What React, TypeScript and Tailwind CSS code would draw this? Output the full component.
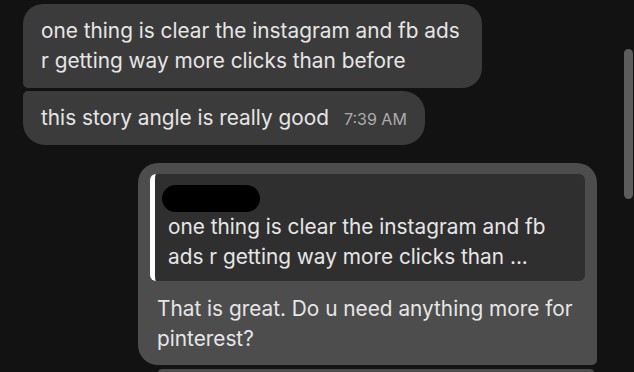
export default function App() {
  return (
    <div
      className="relative h-[372px] w-[634px] overflow-hidden bg-[#121212] text-[#e6e6e6]"
      style={{ fontFamily: "Inter, 'Noto Sans', sans-serif" }}
    >
      <div className="flex flex-col pt-[4px]">
        {/* incoming messages */}
        <div className="flex flex-col items-start gap-[3px] pl-[23px]">
          <div className="w-[459px] rounded-[20px] rounded-bl-[5px] bg-[#3b3b3b] px-[18px] py-[12px] text-[20.8px] leading-[30px]">
            one thing is clear the instagram and fb ads
            <br />r getting way more clicks than before
          </div>
          <div className="flex h-[54px] items-baseline rounded-[22px] rounded-tl-[5px] bg-[#3b3b3b] py-[12px] pl-[18px] pr-[18px] text-[20.8px] leading-[30px]">
            <span>this story angle is really good</span>
            <span className="ml-[15px] text-[16px] leading-[30px] text-[#ababab]">7:39 AM</span>
          </div>
        </div>

        {/* outgoing reply */}
        <div className="mt-[18px] flex flex-col items-end pr-[37px]">
          <div className="w-[459px] rounded-[20px] rounded-br-[5px] bg-[#4d4d4d] px-[12px] pt-[11px] pb-[11px]">
            <div className="rounded-[6px] border-l-[5px] border-white bg-[#2f2f2f] pb-[9px] pl-[7px] pt-[11px] pr-[12px]">
              <div className="h-[27px] w-[98px] rounded-full bg-black" />
              <div className="ml-[6px] text-[20.8px] leading-[30px] text-[#e6e6e6]">
                one thing is clear the instagram and fb
                <br />
                ads r getting way more clicks than ...
              </div>
            </div>
            <div className="mt-[13px] pl-[7px] text-[20.8px] leading-[30px]">
              That is great. Do u need anything more for
              <br />
              pinterest?
            </div>
          </div>
          <div className="mt-[4px] mr-[3px] h-[10px] w-[436px] rounded-t-[4px] bg-[#4d4d4d]" />
        </div>
      </div>

      {/* scrollbar */}
      <div className="absolute right-[1px] top-[49px] h-[150px] w-[9px] rounded-full bg-[#5c5c5c]" />
    </div>
  );
}
